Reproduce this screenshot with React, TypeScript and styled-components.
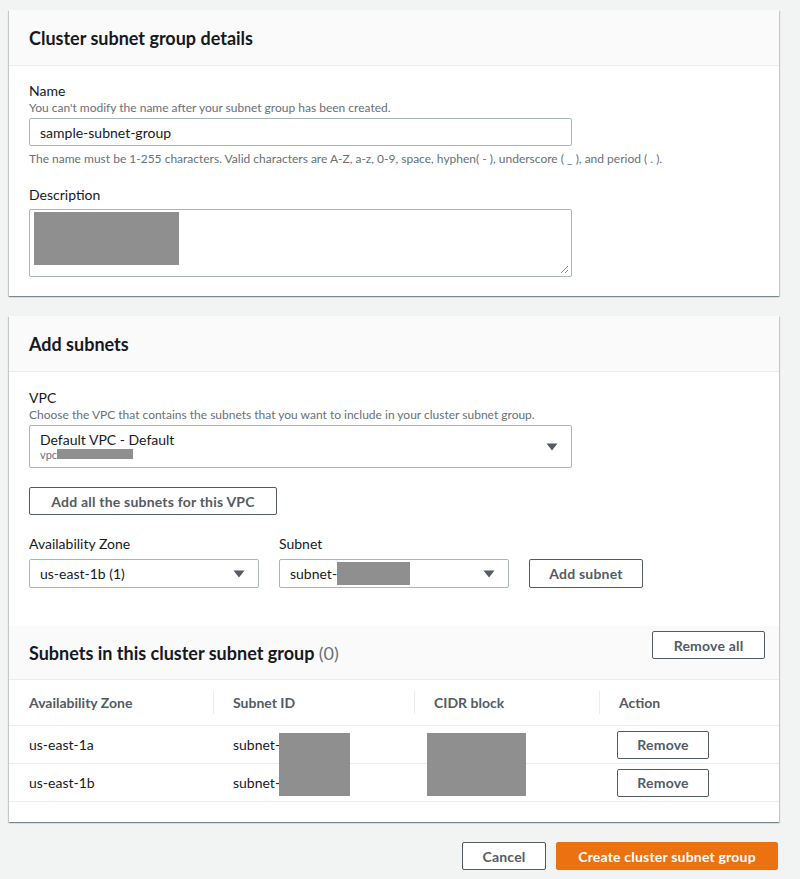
import React from "react";
import styled, { createGlobalStyle } from "styled-components";

const GlobalStyle = createGlobalStyle`
  html, body { margin: 0; padding: 0; background: #f2f3f3; }
  body { font-family: Lato, "Open Sans", "Liberation Sans", sans-serif; color: #16191f; }
  * { box-sizing: border-box; }
`;

const Page = styled.div`
  display: flex;
  flex-direction: column;
  gap: 20px;
  padding: 10px 21px 10px 9px;
  width: 800px;
`;

const Card = styled.section`
  background: #fff;
  box-shadow: 0 1px 1px 0 rgba(0, 28, 36, 0.3), 1px 1px 1px 0 rgba(0, 28, 36, 0.15),
    -1px 1px 1px 0 rgba(0, 28, 36, 0.15);
  display: flex;
  flex-direction: column;
`;

const CardHeader = styled.div<{ $h?: number }>`
  background: #fafafa;
  border-bottom: 1px solid #eaeded;
  height: ${(p) => p.$h ?? 56}px;
  display: flex;
  align-items: center;
  justify-content: space-between;
  padding: 0 14px 0 20px;
`;

const Title = styled.h2`
  margin: 0;
  font-size: 18px;
  font-weight: 700;
  color: #16191f;
`;

const Count = styled.span`
  font-weight: 400;
  color: #687078;
`;

const CardBody = styled.div<{ $pt?: number; $pb?: number }>`
  padding: ${(p) => p.$pt ?? 16}px 20px ${(p) => p.$pb ?? 20}px 20px;
  display: flex;
  flex-direction: column;
`;

const Field = styled.div<{ $mt?: number }>`
  display: flex;
  flex-direction: column;
  margin-top: ${(p) => p.$mt ?? 0}px;
`;

const Label = styled.label`
  font-size: 14px;
  line-height: 18px;
  color: #16191f;
`;

const Hint = styled.div`
  font-size: 12px;
  line-height: 16px;
  color: #687078;
`;

const Input = styled.div<{ $w: number }>`
  width: ${(p) => p.$w}px;
  height: 28px;
  border: 1px solid #aab7b8;
  border-radius: 2px;
  margin-top: 2px;
  font-size: 14px;
  display: flex;
  align-items: center;
  padding: 0 10px;
`;

const Help = styled.div`
  font-size: 12px;
  line-height: 16px;
  color: #687078;
  margin-top: 5px;
`;

const TextArea = styled.div`
  width: 543px;
  height: 68px;
  border: 1px solid #aab7b8;
  border-radius: 2px;
  margin-top: 5px;
  position: relative;
  padding: 2px 4px;
`;

const Redact = styled.div<{ $w: number; $h: number }>`
  width: ${(p) => p.$w}px;
  height: ${(p) => p.$h}px;
  background: #8f8f8f;
  flex-shrink: 0;
`;

const Grip = styled.svg`
  position: absolute;
  right: 2px;
  bottom: 2px;
`;

const Select = styled.div<{ $w: number; $h: number; $mt: number }>`
  width: ${(p) => p.$w}px;
  height: ${(p) => p.$h}px;
  margin-top: ${(p) => p.$mt}px;
  border: 1px solid #aab7b8;
  border-radius: 2px;
  display: flex;
  align-items: center;
  justify-content: space-between;
  padding: 0 13px 0 10px;
  font-size: 14px;
`;

const SelectText = styled.div`
  display: flex;
  flex-direction: column;
  margin-top: -2px;
`;

const SubLine = styled.div`
  display: flex;
  align-items: center;
  font-size: 11px;
  line-height: 13px;
  color: #687078;
`;

const Inline = styled.div`
  display: flex;
  align-items: center;
`;

const Arrow = () => (
  <svg width="12" height="8" viewBox="0 0 12 8">
    <path d="M0.5 0.5 H11.5 L6 7.5 Z" fill="#545b64" />
  </svg>
);

const Button = styled.button<{ $w: number; $h?: number; $primary?: boolean; $top?: boolean }>`
  width: ${(p) => p.$w}px;
  height: ${(p) => p.$h ?? 28}px;
  border: 1px solid ${(p) => (p.$primary ? "#ec7211" : "#545b64")};
  background: ${(p) => (p.$primary ? "#ec7211" : "#fff")};
  color: ${(p) => (p.$primary ? "#fff" : "#545b64")};
  border-radius: 2px;
  font-family: inherit;
  font-size: 14px;
  font-weight: 700;
  letter-spacing: 0.2px;
  padding: 0;
  display: flex;
  align-items: center;
  justify-content: center;
  flex-shrink: 0;
  align-self: ${(p) => (p.$top ? "flex-start" : "auto")};
  margin-top: ${(p) => (p.$top ? "5px" : "0")};
`;

const Row = styled.div<{ $gap: number; $mt: number }>`
  display: flex;
  gap: ${(p) => p.$gap}px;
  align-items: flex-end;
  margin-top: ${(p) => p.$mt}px;
`;

const Table = styled.div`
  display: grid;
  grid-template-columns: 204px 201px 185px 1fr;
`;

const Th = styled.div<{ $sep?: boolean }>`
  height: 46px;
  display: flex;
  align-items: center;
  padding-left: 20px;
  font-size: 14px;
  font-weight: 700;
  color: #545b64;
  border-bottom: 1px solid #eaeded;
  position: relative;
  &::before {
    content: "";
    display: ${(p) => (p.$sep ? "block" : "none")};
    position: absolute;
    left: 0;
    top: 11px;
    bottom: 11px;
    width: 1px;
    background: #eaeded;
  }
`;

const Td = styled.div<{ $pl?: number }>`
  height: 38px;
  display: flex;
  align-items: center;
  padding-left: ${(p) => p.$pl ?? 20}px;
  font-size: 14px;
  color: #16191f;
  border-bottom: 1px solid #eaeded;
  position: relative;
`;

const OverRedact = styled.div<{ $l: number; $w: number }>`
  position: absolute;
  left: ${(p) => p.$l}px;
  top: 7px;
  width: ${(p) => p.$w}px;
  height: 63px;
  background: #8f8f8f;
  z-index: 1;
`;

const Spacer = styled.div<{ $h: number }>`
  height: ${(p) => p.$h}px;
`;

const Footer = styled.div`
  display: flex;
  justify-content: flex-end;
  gap: 10px;
  margin-right: 1px;
`;

export default function App() {
  return (
    <>
      <GlobalStyle />
      <Page>
        <Card>
          <CardHeader $h={56}>
            <Title>Cluster subnet group details</Title>
          </CardHeader>
          <CardBody $pt={16} $pb={19}>
            <Field>
              <Label>Name</Label>
              <Hint>You can't modify the name after your subnet group has been created.</Hint>
              <Input $w={543}>sample-subnet-group</Input>
              <Help>
                The name must be 1-255 characters. Valid characters are A-Z, a-z, 0-9, space,
                hyphen( - ), underscore ( _ ), and period ( . ).
              </Help>
            </Field>
            <Field $mt={19}>
              <Label>Description</Label>
              <TextArea>
                <Redact $w={145} $h={53} />
                <Grip width="10" height="10" viewBox="0 0 10 10">
                  <path d="M9 2 L2 9 M9 6 L6 9" stroke="#7d8998" strokeWidth="1" />
                </Grip>
              </TextArea>
            </Field>
          </CardBody>
        </Card>

        <Card>
          <CardHeader $h={56}>
            <Title>Add subnets</Title>
          </CardHeader>
          <CardBody $pt={17} $pb={0}>
            <Field>
              <Label>VPC</Label>
              <Hint>
                Choose the VPC that contains the subnets that you want to include in your cluster
                subnet group.
              </Hint>
              <Select $w={543} $h={43} $mt={2}>
                <SelectText>
                  <span>Default VPC - Default</span>
                  <SubLine>
                    vpc
                    <Redact $w={76} $h={10} />
                  </SubLine>
                </SelectText>
                <Arrow />
              </Select>
            </Field>
            <Row $gap={0} $mt={19}>
              <Button $w={248}>Add all the subnets for this VPC</Button>
            </Row>
            <Row $gap={20} $mt={20}>
              <Field>
                <Label>Availability Zone</Label>
                <Select $w={230} $h={29} $mt={6}>
                  <span>us-east-1b (1)</span>
                  <Arrow />
                </Select>
              </Field>
              <Field>
                <Label>Subnet</Label>
                <Select $w={230} $h={29} $mt={6}>
                  <Inline>
                    subnet-
                    <Redact $w={73} $h={23} />
                  </Inline>
                  <Arrow />
                </Select>
              </Field>
              <Button $w={114} $h={29}>
                Add subnet
              </Button>
            </Row>
          </CardBody>
          <Spacer $h={38} />
          <CardHeader $h={54}>
            <Title>
              Subnets in this cluster subnet group <Count>(0)</Count>
            </Title>
            <Button $w={113} $top>
              Remove all
            </Button>
          </CardHeader>
          <Table>
            <Th>Availability Zone</Th>
            <Th $sep>Subnet ID</Th>
            <Th $sep>CIDR block</Th>
            <Th $sep>Action</Th>

            <Td>us-east-1a</Td>
            <Td>
              subnet-
              <OverRedact $l={66} $w={71} />
            </Td>
            <Td>
              <OverRedact $l={13} $w={99} />
            </Td>
            <Td $pl={18}>
              <Button $w={92}>Remove</Button>
            </Td>

            <Td>us-east-1b</Td>
            <Td>subnet-</Td>
            <Td />
            <Td $pl={18}>
              <Button $w={92}>Remove</Button>
            </Td>
          </Table>
          <Spacer $h={20} />
        </Card>

        <Footer>
          <Button $w={84}>Cancel</Button>
          <Button $w={222} $primary>
            Create cluster subnet group
          </Button>
        </Footer>
      </Page>
    </>
  );
}
